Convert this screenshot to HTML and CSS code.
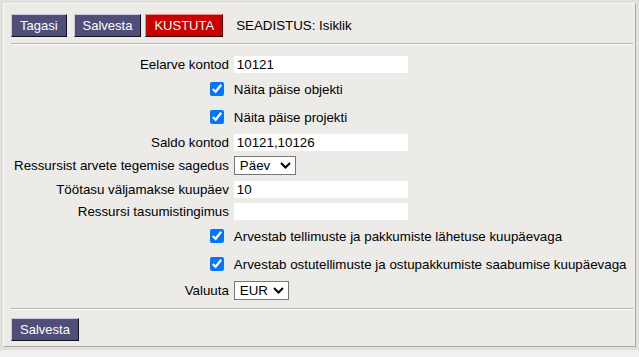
FILE: index.html
```html
<!DOCTYPE html>
<html lang="et">
<head>
<meta charset="utf-8">
<title>SEADISTUS: Isiklik</title>
<link rel="stylesheet" href="styles.css">
</head>
<body>
<div class="page">
  <div class="panel">
    <div class="toolbar">
      <button class="btn btn-first" type="button">Tagasi</button>
      <button class="btn" type="button">Salvesta</button>
      <button class="btn btn-danger" type="button">KUSTUTA</button>
      <span class="title">SEADISTUS: Isiklik</span>
    </div>
    <div class="sep"></div>
    <div class="form">
      <div class="row h-input">
        <label class="lbl" for="f1">Eelarve kontod</label>
        <div class="val"><input id="f1" class="txt" type="text" value="10121"></div>
      </div>
      <div class="row h-check">
        <div class="lbl"><input id="c1" class="chk" type="checkbox" checked></div>
        <label class="val" for="c1">Näita päise objekti</label>
      </div>
      <div class="row h-check">
        <div class="lbl"><input id="c2" class="chk" type="checkbox" checked></div>
        <label class="val" for="c2">Näita päise projekti</label>
      </div>
      <div class="row h-input">
        <label class="lbl" for="f2">Saldo kontod</label>
        <div class="val"><input id="f2" class="txt" type="text" value="10121,10126"></div>
      </div>
      <div class="row h-select">
        <label class="lbl" for="s1">Ressursist arvete tegemise sagedus</label>
        <div class="val">
          <span class="selwrap">
            <select id="s1" class="sel sel-day"><option>Päev</option></select>
            <svg class="chev" width="11" height="7" viewBox="0 0 11 7" aria-hidden="true"><polyline points="1,1 5.5,5.5 10,1" fill="none" stroke="#000" stroke-width="2"/></svg>
          </span>
        </div>
      </div>
      <div class="row h-input">
        <label class="lbl" for="f3">Töötasu väljamakse kuupäev</label>
        <div class="val"><input id="f3" class="txt" type="text" value="10"></div>
      </div>
      <div class="row h-input">
        <label class="lbl" for="f4">Ressursi tasumistingimus</label>
        <div class="val"><input id="f4" class="txt" type="text" value=""></div>
      </div>
      <div class="row h-check">
        <div class="lbl"><input id="c3" class="chk" type="checkbox" checked></div>
        <label class="val" for="c3">Arvestab tellimuste ja pakkumiste lähetuse kuupäevaga</label>
      </div>
      <div class="row h-check">
        <div class="lbl"><input id="c4" class="chk" type="checkbox" checked></div>
        <label class="val" for="c4">Arvestab ostutellimuste ja ostupakkumiste saabumise kuupäevaga</label>
      </div>
      <div class="row h-select">
        <label class="lbl" for="s2">Valuuta</label>
        <div class="val">
          <span class="selwrap">
            <select id="s2" class="sel sel-cur"><option>EUR</option></select>
            <svg class="chev" width="11" height="7" viewBox="0 0 11 7" aria-hidden="true"><polyline points="1,1 5.5,5.5 10,1" fill="none" stroke="#000" stroke-width="2"/></svg>
          </span>
        </div>
      </div>
    </div>
    <div class="sep sep-bottom"></div>
    <div class="footer">
      <button class="btn" type="button">Salvesta</button>
    </div>
  </div>
</div>
</body>
</html>
```
FILE: styles.css
```css
* { box-sizing: border-box; }

html, body {
  margin: 0;
  padding: 0;
}

body {
  background: #f0f0ef;
  font-family: "Liberation Sans", Arial, sans-serif;
  font-size: 13.33px;
  color: #000;
}

.page {
  height: 350px;
  padding: 3px 3px 3px 3px;
  background: #e1e0dd;
}

.panel {
  height: 100%;
  background: #ecebe8;
  border-top: 1px solid #fbfbfa;
  border-left: 1px solid #fbfbfa;
  border-right: 1px solid #a9a8a5;
  border-bottom: 1px solid #a9a8a5;
  padding: 10px 2px 0 7px;
}

.toolbar {
  display: flex;
  align-items: center;
  gap: 4px;
  height: 23px;
}

.btn {
  font-family: "Liberation Sans", Arial, sans-serif;
  font-size: 13px;
  height: 23px;
  line-height: 21px;
  padding: 0 8px;
  margin: 0;
  color: #fff;
  background: #4e4e78;
  border-top: 1px solid #c9c9dc;
  border-left: 1px solid #c9c9dc;
  border-right: 1px solid #111118;
  border-bottom: 1px solid #111118;
  border-radius: 0;
  cursor: pointer;
}

.btn-first { margin-right: 3px; }

.btn-danger {
  background: #c80000;
  border-top-color: #ee8a8a;
  border-left-color: #ee8a8a;
  border-right-color: #3a0000;
  border-bottom-color: #3a0000;
}

.title {
  margin-left: 9px;
  white-space: nowrap;
}

.sep {
  height: 2px;
  margin-top: 6px;
  border-top: 1px solid #b4b3b0;
  border-bottom: 1px solid #fbfbfa;
}

.sep-bottom { margin-top: 5px; }

.form {
  display: grid;
  grid-template-columns: max-content auto;
  column-gap: 5px;
  margin: 8px 0 0 3px;
}

.row { display: contents; }

.lbl, .val {
  display: flex;
  align-items: center;
  white-space: nowrap;
}

.lbl { justify-content: flex-end; }

.h-input > * { height: 22px; }
.h-check > * { height: 28px; }
.h-select > * { height: 25px; }

.txt {
  width: 174px;
  height: 17px;
  border: 0;
  background: #fff;
  padding: 0 3px;
  margin: 0;
  font-family: "Liberation Sans", Arial, sans-serif;
  font-size: 13.33px;
  color: #000;
  outline: none;
}

.chk {
  width: 14px;
  height: 14px;
  margin: 0 5px 0 0;
  accent-color: #0075ff;
}

.selwrap {
  position: relative;
  display: inline-block;
  height: 19px;
}

.sel {
  appearance: none;
  -webkit-appearance: none;
  height: 19px;
  margin: 0;
  padding: 0 0 0 5px;
  border: 1px solid #767676;
  border-radius: 0;
  background: #fff;
  font-family: "Liberation Sans", Arial, sans-serif;
  font-size: 13.33px;
  color: #000;
  line-height: 17px;
}

.sel-day { width: 62px; }
.sel-cur { width: 55px; }

.chev {
  position: absolute;
  right: 5px;
  top: 6px;
  pointer-events: none;
}

.footer {
  padding-top: 8px;
}
```
